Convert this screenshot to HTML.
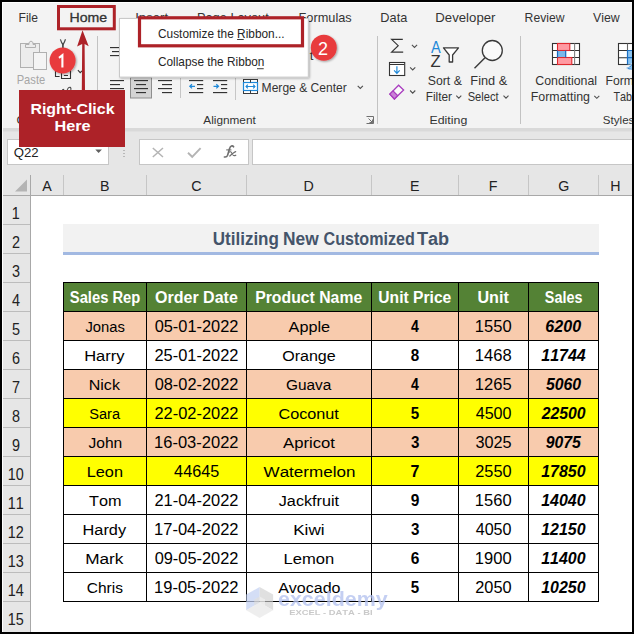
<!DOCTYPE html>
<html><head><meta charset="utf-8"><style>
html,body{margin:0;padding:0;width:634px;height:634px;overflow:hidden;background:#000}
svg{display:block}
text{font-kerning:none}
</style></head><body>
<svg width="634" height="634" viewBox="0 0 634 634">
<rect x="0" y="0" width="634" height="634" fill="#000" />
<rect x="2" y="2" width="630" height="630" fill="#fff" />
<rect x="3" y="3" width="629" height="125" fill="#f3f3f3" />
<rect x="3" y="130" width="629" height="65" fill="#e6e6e6" />
<rect x="3" y="128" width="629" height="3.5" fill="#d9d9d9" />
<rect x="7.5" y="139.5" width="101" height="25" fill="#fff" stroke="#c6c6c6" stroke-width="1"/>
<rect x="139.5" y="139.5" width="109" height="25" fill="#fff" stroke="#c6c6c6" stroke-width="1"/>
<rect x="252.5" y="139.5" width="385" height="25" fill="#fff" stroke="#c6c6c6" stroke-width="1"/>
<rect x="31" y="196" width="601" height="436" fill="#fff" />
<rect x="3" y="196" width="27" height="436" fill="#e6e6e6" />
<text transform="translate(18.51 22.10) scale(0.9621 1)" font-family="Liberation Sans" font-size="12.60" fill="#333333" >File</text>
<text transform="translate(69.54 22.10) scale(1.1213 1)" font-family="Liberation Sans" font-size="12.60" fill="#333333" stroke="#333" stroke-width="0.3">Home</text>
<text transform="translate(135.19 22.10) scale(1.0444 1)" font-family="Liberation Sans" font-size="12.60" fill="#333333" >Insert</text>
<text transform="translate(196.95 22.10) scale(1.0168 1)" font-family="Liberation Sans" font-size="12.60" fill="#333333" >Page Layout</text>
<text transform="translate(298.55 22.10) scale(1.0133 1)" font-family="Liberation Sans" font-size="12.60" fill="#333333" >Formulas</text>
<text transform="translate(380.35 22.10) scale(1.0125 1)" font-family="Liberation Sans" font-size="12.60" fill="#333333" >Data</text>
<text transform="translate(435.32 22.10) scale(1.0482 1)" font-family="Liberation Sans" font-size="12.60" fill="#333333" >Developer</text>
<text transform="translate(524.60 22.10) scale(0.9650 1)" font-family="Liberation Sans" font-size="12.60" fill="#333333" >Review</text>
<text transform="translate(593.05 22.10) scale(0.9785 1)" font-family="Liberation Sans" font-size="12.60" fill="#333333" >View</text>
<rect x="97" y="36" width="1" height="88" fill="#c2c2c2" />
<rect x="377" y="36" width="1" height="88" fill="#c2c2c2" />
<rect x="520" y="36" width="1" height="88" fill="#c2c2c2" />
<rect x="20.5" y="43.5" width="19" height="24" fill="#ececec" stroke="#b0b0b0" stroke-width="1"/>
<path d="M25.5 47.5 V44.5 H29 V42.5 Q31 39.5 33 42.5 V44.5 H35.5 V47.5 Z" fill="#ececec" stroke="#b0b0b0" stroke-width="1"/>
<rect x="33.5" y="52.5" width="13" height="17" fill="#f4f4f4" stroke="#b0b0b0" stroke-width="1"/>
<text transform="translate(16.69 84.40) scale(0.9291 1)" font-family="Liberation Sans" font-size="12.00" fill="#a6a6a6" >Paste</text>
<text transform="translate(16.39 123.80) scale(1.0913 1)" font-family="Liberation Sans" font-size="11.00" fill="#333333" >Clipboard</text>
<path d="M60.4 39.3 Q61.4 42.6 62.9 44.6 Q64.4 42.6 65.5 39.3" fill="none" stroke="#4a4a4a" stroke-width="1.2"/>
<path d="M62.9 44 V48" stroke="#4a4a4a" stroke-width="1.7"/>
<path d="M55.5 70 V76.5 H59.6 M61.5 70 V78.5 H70.5 V70 M63.9 75.5 H68" fill="none" stroke="#333" stroke-width="1.1"/>
<path d="M77.9 70.2 L80.2 72.6 L82.0 70.8" fill="none" stroke="#333" stroke-width="1.1"/>
<path d="M62.2 89.8 L64.2 89.3 M67.2 89.9 Q68.4 86.8 70.2 87.3 Q71.4 87.9 70.8 89.9" fill="none" stroke="#404040" stroke-width="1.1"/>
<rect x="110" y="47" width="14" height="1.15" fill="#333" />
<rect x="112" y="51" width="12" height="1.15" fill="#333" />
<rect x="110" y="55" width="14" height="1.15" fill="#333" />
<text transform="translate(309.80 60.20) scale(1.0567 1)" font-family="Liberation Sans" font-size="12.60" fill="#333333" >t</text>
<rect x="110" y="80" width="14" height="1.15" fill="#333" />
<rect x="110" y="84" width="10" height="1.15" fill="#333" />
<rect x="110" y="88" width="14" height="1.15" fill="#333" />
<rect x="110" y="92" width="10" height="1.15" fill="#333" />
<rect x="130.5" y="77.5" width="21" height="20.5" fill="#d4d4d4" stroke="#8e8e8e" stroke-width="1"/>
<rect x="134" y="80" width="14" height="1.15" fill="#333" />
<rect x="136" y="84" width="10" height="1.15" fill="#333" />
<rect x="134" y="88" width="14" height="1.15" fill="#333" />
<rect x="136" y="92" width="10" height="1.15" fill="#333" />
<rect x="158" y="80" width="14" height="1.15" fill="#333" />
<rect x="162" y="84" width="10" height="1.15" fill="#333" />
<rect x="158" y="88" width="14" height="1.15" fill="#333" />
<rect x="162" y="92" width="10" height="1.15" fill="#333" />
<rect x="180" y="78" width="1" height="20" fill="#c6c6c6" />
<rect x="235" y="78" width="1" height="22" fill="#c6c6c6" />
<rect x="189" y="80" width="14.2" height="1.15" fill="#333" />
<rect x="197" y="84" width="6.2" height="1.15" fill="#333" />
<rect x="197" y="88" width="6.2" height="1.15" fill="#333" />
<rect x="189" y="92" width="14.2" height="1.15" fill="#333" />
<path d="M195 86.3 H189.8 M192 84.2 L189.8 86.3 L192 88.4" fill="none" stroke="#1e88d8" stroke-width="1.2"/>
<rect x="213" y="80" width="14.2" height="1.15" fill="#333" />
<rect x="221" y="84" width="6.2" height="1.15" fill="#333" />
<rect x="221" y="88" width="6.2" height="1.15" fill="#333" />
<rect x="213" y="92" width="14.2" height="1.15" fill="#333" />
<path d="M213.5 86.3 H218.5 M216.3 84.2 L218.5 86.3 L216.3 88.4" fill="none" stroke="#1e88d8" stroke-width="1.2"/>
<rect x="243.5" y="79.5" width="14" height="14" fill="#fff" stroke="#3a3a3a" stroke-width="1"/>
<rect x="243.5" y="82.5" width="14" height="8" fill="#fff" stroke="#1e88d8" stroke-width="1.2"/>
<path d="M250.5 79.5 V82.5 M250.5 90.5 V93.5" stroke="#3a3a3a" stroke-width="1"/>
<path d="M246 86.5 H255 M247.8 84.6 L246 86.5 L247.8 88.4 M253.2 84.6 L255 86.5 L253.2 88.4" fill="none" stroke="#1e88d8" stroke-width="1.1"/>
<text transform="translate(261.61 91.80) scale(0.9590 1)" font-family="Liberation Sans" font-size="12.60" fill="#333333" >Merge &amp; Center</text>
<path d="M357.7 85.8 L360.3 88.4 L362.9 85.8" fill="none" stroke="#505050" stroke-width="1.1"/>
<path d="M366.5 116.5 H373.5 V123.5 H366.5" fill="none" stroke="#606060" stroke-width="0.9"/><path d="M368.5 118.5 L372.5 122.5 M372.5 119.5 V122.5 H369.5" fill="none" stroke="#606060" stroke-width="0.9"/>
<text transform="translate(203.28 123.70) scale(1.0543 1)" font-family="Liberation Sans" font-size="11.20" fill="#333333" >Alignment</text>
<path d="M402.8 39.3 H391.6 L398.2 45.7 L391.6 52.1 H403.2" fill="none" stroke="#333" stroke-width="1.15"/>
<path d="M411.9 44.900000000000006 L414.5 47.5 L417.1 44.900000000000006" fill="none" stroke="#505050" stroke-width="1.1"/>
<path d="M410.09999999999997 67.3 L412.7 69.89999999999999 L415.3 67.3" fill="none" stroke="#505050" stroke-width="1.1"/>
<path d="M410.09999999999997 90.5 L412.7 93.1 L415.3 90.5" fill="none" stroke="#505050" stroke-width="1.1"/>
<rect x="389.5" y="62.5" width="15.2" height="13" fill="#fff" stroke="#333" stroke-width="1.1"/>
<rect x="390" y="64" width="14.2" height="1.0" fill="#333" />
<path d="M396.9 66.2 V73.2 M394.1 70.4 L396.9 73.3 L399.7 70.4" fill="none" stroke="#1e88d8" stroke-width="1.2"/>
<path d="M389.8 94.1 L398.6 85.2 L403.6 90.0 L394.4 99.0 Z" fill="#fafafa" stroke="#a83bbf" stroke-width="1.3" stroke-linejoin="miter"/>
<path d="M389.8 94.1 L393.0 90.9 L397.6 95.6 L394.4 99.0 Z" fill="#c982d6" stroke="#a83bbf" stroke-width="1.2"/>
<text transform="translate(430.97 52.60) scale(0.8605 1)" font-family="Liberation Sans" font-size="17.00" fill="#1e88d8" >A</text>
<text transform="translate(430.47 66.50) scale(1.0006 1)" font-family="Liberation Sans" font-size="16.60" fill="#333" >Z</text>
<path d="M443.5 47.8 H458.5 L452.6 55 V62 H449.2 V55 Z" fill="#fff" stroke="#3a3a3a" stroke-width="1.3" stroke-linejoin="round"/>
<text transform="translate(427.74 84.90) scale(0.9754 1)" font-family="Liberation Sans" font-size="12.60" fill="#333333" >Sort &amp;</text>
<text transform="translate(425.73 100.70) scale(0.9381 1)" font-family="Liberation Sans" font-size="12.60" fill="#333333" >Filter</text>
<path d="M456.3 95.6 L458.8 98.1 L461.3 95.6" fill="none" stroke="#505050" stroke-width="1.1"/>
<text transform="translate(429.49 123.80) scale(1.1041 1)" font-family="Liberation Sans" font-size="11.20" fill="#333333" >Editing</text>
<circle cx="492.3" cy="50.5" r="10" fill="#fafafa" stroke="#3a3a3a" stroke-width="1.3"/>
<path d="M485 57.8 L474.5 68.3" stroke="#3a3a3a" stroke-width="1.4"/>
<text transform="translate(470.35 85.00) scale(1.0118 1)" font-family="Liberation Sans" font-size="12.60" fill="#333333" >Find &amp;</text>
<text transform="translate(467.69 100.70) scale(0.8849 1)" font-family="Liberation Sans" font-size="12.60" fill="#333333" >Select</text>
<path d="M503.5 95.6 L506 98.1 L508.5 95.6" fill="none" stroke="#505050" stroke-width="1.1"/>
<rect x="552.5" y="43.5" width="27" height="21" fill="#fff" stroke="#333" stroke-width="1.1"/>
<path d="M552.5 50.5 H579.5 M552.5 57.5 H579.5" stroke="#333" stroke-width="1.1"/>
<path d="M574.6 43.5 V64.5" stroke="#808080" stroke-width="1.1"/>
<rect x="557.5" y="43.5" width="12.3" height="7" fill="#ff9aa2" stroke="#e0282e" stroke-width="1.1"/>
<rect x="557.5" y="57.5" width="14.3" height="7" fill="#ff9aa2" stroke="#e0282e" stroke-width="1.1"/>
<rect x="557.5" y="51" width="8.2" height="6" fill="#7ab8ea"/>
<path d="M557.5 50.5 V57.5 M565.7 50.5 V57.5" stroke="#1565c0" stroke-width="1.2"/>
<text transform="translate(535.27 85.00) scale(0.9812 1)" font-family="Liberation Sans" font-size="12.60" fill="#333333" >Conditional</text>
<text transform="translate(530.78 100.70) scale(0.9833 1)" font-family="Liberation Sans" font-size="12.60" fill="#333333" >Formatting</text>
<path d="M594.3 95.8 L596.8 98.3 L599.3 95.8" fill="none" stroke="#505050" stroke-width="1.1"/>
<rect x="618.5" y="43.5" width="20" height="21" fill="#fff" stroke="#333" stroke-width="1.1"/>
<path d="M618.5 50.5 H640 M618.5 57.7 H627.5" stroke="#333" stroke-width="1.1"/>
<path d="M627.5 43.5 V50.5" stroke="#666" stroke-width="1.1"/>
<rect x="628" y="51" width="12" height="13.5" fill="#8cc4f0" />
<path d="M627.5 64.5 V50.5 H640 M627.5 57.7 H640" fill="none" stroke="#1a6fc4" stroke-width="1.2"/>
<path d="M624.8 67.4 Q628.6 68.2 631.2 64.6 Q632.4 62.4 634 61 V70 Q629 70.6 624.8 67.4 Z" fill="#1a6fc4" stroke="#fff" stroke-width="0.8"/>
<path d="M627.4 67.6 Q630.6 67.4 632.2 64.2 L634 62.6 V68.6 Q630 69.6 627.4 67.6 Z" fill="#8cc4f0"/>
<text transform="translate(605.60 85.00) scale(0.9670 1)" font-family="Liberation Sans" font-size="12.60" fill="#333333" >Format as</text>
<text transform="translate(613.46 100.70) scale(0.8574 1)" font-family="Liberation Sans" font-size="12.60" fill="#333333" >Table</text>
<text transform="translate(602.87 124.00) scale(1.0343 1)" font-family="Liberation Sans" font-size="11.20" fill="#333333" >Styles</text>
<text transform="translate(13.78 157.20) scale(1.0618 1)" font-family="Liberation Sans" font-size="12.40" fill="#222" >Q22</text>
<polygon points="95.3,149.6 101.9,149.6 98.6,152.9" fill="#606060"/>
<rect x="123.5" y="150.0" width="1" height="1" fill="#8a8a8a" />
<rect x="123.5" y="153.0" width="1" height="1" fill="#8a8a8a" />
<rect x="123.5" y="156.0" width="1" height="1" fill="#8a8a8a" />
<path d="M152.8 148 L163 157 M163 148 L152.8 157" stroke="#b4b4b4" stroke-width="1.5"/>
<path d="M188 152.8 L192.2 156.8 L200.6 148.2" fill="none" stroke="#b4b4b4" stroke-width="1.9"/>
<path d="M233.6 146.8 Q232.8 145.6 231.4 146.0 Q230.0 146.5 229.5 148.8 L227.6 155.2 Q226.8 157.4 224.4 157.0" fill="none" stroke="#6e6e6e" stroke-width="1.6" stroke-linecap="round"/>
<path d="M226.2 149.9 H231.4" stroke="#6e6e6e" stroke-width="1.1"/>
<path d="M229.4 152.0 Q230.8 151.2 231.6 152.8 L233.0 155.0 Q233.9 156.2 235.8 155.2 M235.7 151.6 Q234.0 152.2 229.8 156.0" fill="none" stroke="#6e6e6e" stroke-width="1.2" stroke-linecap="round"/>
<rect x="3" y="195" width="629" height="1" fill="#a8a8a8" />
<rect x="30" y="175" width="1" height="457" fill="#a8a8a8" />
<rect x="63" y="175" width="1" height="20" fill="#c6c6c6" />
<rect x="146" y="175" width="1" height="20" fill="#c6c6c6" />
<rect x="246" y="175" width="1" height="20" fill="#c6c6c6" />
<rect x="371" y="175" width="1" height="20" fill="#c6c6c6" />
<rect x="458" y="175" width="1" height="20" fill="#c6c6c6" />
<rect x="528" y="175" width="1" height="20" fill="#c6c6c6" />
<rect x="598" y="175" width="1" height="20" fill="#c6c6c6" />
<polygon points="27,179.5 27,191.5 15,191.5" fill="#b4b4b4"/>
<text transform="translate(42.25 190.80) scale(0.9500 1)" font-family="Liberation Sans" font-size="15.00" fill="#222" >A</text>
<text transform="translate(100.04 190.80) scale(0.9500 1)" font-family="Liberation Sans" font-size="15.00" fill="#222" >B</text>
<text transform="translate(191.26 190.80) scale(0.9500 1)" font-family="Liberation Sans" font-size="15.00" fill="#222" >C</text>
<text transform="translate(303.61 190.80) scale(0.9500 1)" font-family="Liberation Sans" font-size="15.00" fill="#222" >D</text>
<text transform="translate(409.97 190.80) scale(0.9500 1)" font-family="Liberation Sans" font-size="15.00" fill="#222" >E</text>
<text transform="translate(488.85 190.80) scale(0.9500 1)" font-family="Liberation Sans" font-size="15.00" fill="#222" >F</text>
<text transform="translate(558.13 190.80) scale(0.9500 1)" font-family="Liberation Sans" font-size="15.00" fill="#222" >G</text>
<text transform="translate(610.35 190.80) scale(0.9500 1)" font-family="Liberation Sans" font-size="15.00" fill="#222" >H</text>
<text transform="translate(11.80 218.80) scale(0.9000 1)" font-family="Liberation Sans" font-size="16.00" fill="#222" >1</text>
<rect x="3" y="224" width="27" height="1" fill="#bcbcbc" />
<text transform="translate(12.00 247.80) scale(0.9000 1)" font-family="Liberation Sans" font-size="16.00" fill="#222" >2</text>
<rect x="3" y="253" width="27" height="1" fill="#bcbcbc" />
<text transform="translate(12.04 276.80) scale(0.9000 1)" font-family="Liberation Sans" font-size="16.00" fill="#222" >3</text>
<rect x="3" y="282" width="27" height="1" fill="#bcbcbc" />
<text transform="translate(12.04 305.80) scale(0.9000 1)" font-family="Liberation Sans" font-size="16.00" fill="#222" >4</text>
<rect x="3" y="311" width="27" height="1" fill="#bcbcbc" />
<text transform="translate(12.01 334.80) scale(0.9000 1)" font-family="Liberation Sans" font-size="16.00" fill="#222" >5</text>
<rect x="3" y="340" width="27" height="1" fill="#bcbcbc" />
<text transform="translate(11.95 363.80) scale(0.9000 1)" font-family="Liberation Sans" font-size="16.00" fill="#222" >6</text>
<rect x="3" y="369" width="27" height="1" fill="#bcbcbc" />
<text transform="translate(11.99 392.80) scale(0.9000 1)" font-family="Liberation Sans" font-size="16.00" fill="#222" >7</text>
<rect x="3" y="398" width="27" height="1" fill="#bcbcbc" />
<text transform="translate(12.00 421.80) scale(0.9000 1)" font-family="Liberation Sans" font-size="16.00" fill="#222" >8</text>
<rect x="3" y="427" width="27" height="1" fill="#bcbcbc" />
<text transform="translate(12.00 450.80) scale(0.9000 1)" font-family="Liberation Sans" font-size="16.00" fill="#222" >9</text>
<rect x="3" y="456" width="27" height="1" fill="#bcbcbc" />
<text transform="translate(7.72 479.80) scale(0.9000 1)" font-family="Liberation Sans" font-size="16.00" fill="#222" >10</text>
<rect x="3" y="485" width="27" height="1" fill="#bcbcbc" />
<text transform="translate(7.79 508.80) scale(0.9000 1)" font-family="Liberation Sans" font-size="16.00" fill="#222" >11</text>
<rect x="3" y="514" width="27" height="1" fill="#bcbcbc" />
<text transform="translate(7.81 537.80) scale(0.9000 1)" font-family="Liberation Sans" font-size="16.00" fill="#222" >12</text>
<rect x="3" y="543" width="27" height="1" fill="#bcbcbc" />
<text transform="translate(7.76 566.80) scale(0.9000 1)" font-family="Liberation Sans" font-size="16.00" fill="#222" >13</text>
<rect x="3" y="572" width="27" height="1" fill="#bcbcbc" />
<text transform="translate(7.65 595.80) scale(0.9000 1)" font-family="Liberation Sans" font-size="16.00" fill="#222" >14</text>
<rect x="3" y="601" width="27" height="1" fill="#bcbcbc" />
<text transform="translate(7.75 624.80) scale(0.9000 1)" font-family="Liberation Sans" font-size="16.00" fill="#222" >15</text>
<rect x="63" y="224" width="536" height="28" fill="#f2f2f2" />
<rect x="63" y="252" width="536" height="3" fill="#a2b9e2" />
<text transform="translate(212.78 244.70) scale(0.9668 1)" font-family="Liberation Sans" font-size="17.60" font-weight="bold" fill="#44546a" >Utilizing</text>
<text transform="translate(283.04 244.70) scale(0.9873 1)" font-family="Liberation Sans" font-size="17.60" font-weight="bold" fill="#44546a" >New</text>
<text transform="translate(323.54 244.70) scale(0.9156 1)" font-family="Liberation Sans" font-size="17.60" font-weight="bold" fill="#44546a" >Customized</text>
<text transform="translate(417.00 244.70) scale(1.0273 1)" font-family="Liberation Sans" font-size="17.60" font-weight="bold" fill="#44546a" >Tab</text>
<rect x="63" y="282" width="535" height="29" fill="#548235" />
<rect x="63" y="311" width="535" height="29" fill="#f8cbad" />
<rect x="63" y="340" width="535" height="29" fill="#ffffff" />
<rect x="63" y="369" width="535" height="29" fill="#f8cbad" />
<rect x="63" y="398" width="535" height="29" fill="#ffff00" />
<rect x="63" y="427" width="535" height="29" fill="#f8cbad" />
<rect x="63" y="456" width="535" height="29" fill="#ffff00" />
<rect x="63" y="485" width="535" height="29" fill="#ffffff" />
<rect x="63" y="514" width="535" height="29" fill="#ffffff" />
<rect x="63" y="543" width="535" height="29" fill="#ffffff" />
<rect x="63" y="572" width="535" height="29" fill="#ffffff" />
<text transform="translate(69.80 302.80) scale(0.9464 1)" font-family="Liberation Sans" font-size="15.60" font-weight="bold" fill="#fff" >Sales Rep</text>
<text transform="translate(155.00 302.80) scale(1.0281 1)" font-family="Liberation Sans" font-size="15.60" font-weight="bold" fill="#fff" >Order Date</text>
<text transform="translate(255.20 302.80) scale(1.0125 1)" font-family="Liberation Sans" font-size="15.60" font-weight="bold" fill="#fff" >Product Name</text>
<text transform="translate(378.34 302.80) scale(1.0013 1)" font-family="Liberation Sans" font-size="15.60" font-weight="bold" fill="#fff" >Unit Price</text>
<text transform="translate(477.40 302.80) scale(1.0361 1)" font-family="Liberation Sans" font-size="15.60" font-weight="bold" fill="#fff" >Unit</text>
<text transform="translate(544.80 302.80) scale(0.9217 1)" font-family="Liberation Sans" font-size="15.60" font-weight="bold" fill="#fff" >Sales</text>
<text transform="translate(85.39 331.90) scale(0.9554 1)" font-family="Liberation Sans" font-size="15.50" fill="#000" >Jonas</text>
<text transform="translate(154.66 331.90) scale(1.0312 1)" font-family="Liberation Sans" font-size="15.90" fill="#000" >05-01-2022</text>
<text transform="translate(288.56 331.90) scale(1.0486 1)" font-family="Liberation Sans" font-size="15.50" fill="#000" >Apple</text>
<text transform="translate(411.03 331.90) scale(0.8833 1)" font-family="Liberation Sans" font-size="15.90" font-weight="bold" fill="#000" >4</text>
<text transform="translate(474.79 331.90) scale(1.0403 1)" font-family="Liberation Sans" font-size="15.90" fill="#000" >1550</text>
<text transform="translate(545.31 331.90) scale(1.0120 1)" font-family="Liberation Sans" font-size="15.90" font-weight="bold" font-style="italic" fill="#000" >6200</text>
<text transform="translate(84.18 360.90) scale(1.0642 1)" font-family="Liberation Sans" font-size="15.50" fill="#000" >Harry</text>
<text transform="translate(154.47 360.90) scale(1.0335 1)" font-family="Liberation Sans" font-size="15.90" fill="#000" >25-01-2022</text>
<text transform="translate(282.19 360.90) scale(1.0363 1)" font-family="Liberation Sans" font-size="15.50" fill="#000" >Orange</text>
<text transform="translate(410.75 360.90) scale(0.9585 1)" font-family="Liberation Sans" font-size="15.90" font-weight="bold" fill="#000" >8</text>
<text transform="translate(474.79 360.90) scale(1.0425 1)" font-family="Liberation Sans" font-size="15.90" fill="#000" >1468</text>
<text transform="translate(541.23 360.90) scale(1.0075 1)" font-family="Liberation Sans" font-size="15.90" font-weight="bold" font-style="italic" fill="#000" >11744</text>
<text transform="translate(88.71 389.90) scale(1.0365 1)" font-family="Liberation Sans" font-size="15.50" fill="#000" >Nick</text>
<text transform="translate(154.66 389.90) scale(1.0312 1)" font-family="Liberation Sans" font-size="15.90" fill="#000" >08-02-2022</text>
<text transform="translate(285.93 389.90) scale(0.9933 1)" font-family="Liberation Sans" font-size="15.50" fill="#000" >Guava</text>
<text transform="translate(411.03 389.90) scale(0.8833 1)" font-family="Liberation Sans" font-size="15.90" font-weight="bold" fill="#000" >4</text>
<text transform="translate(474.79 389.90) scale(1.0418 1)" font-family="Liberation Sans" font-size="15.90" fill="#000" >1265</text>
<text transform="translate(545.90 389.90) scale(0.9952 1)" font-family="Liberation Sans" font-size="15.90" font-weight="bold" font-style="italic" fill="#000" >5060</text>
<text transform="translate(89.24 418.90) scale(0.9424 1)" font-family="Liberation Sans" font-size="15.50" fill="#000" >Sara</text>
<text transform="translate(154.47 418.90) scale(1.0335 1)" font-family="Liberation Sans" font-size="15.90" fill="#000" >22-02-2022</text>
<text transform="translate(278.41 418.90) scale(1.0476 1)" font-family="Liberation Sans" font-size="15.50" fill="#000" >Coconut</text>
<text transform="translate(410.77 418.90) scale(0.9509 1)" font-family="Liberation Sans" font-size="15.90" font-weight="bold" fill="#000" >5</text>
<text transform="translate(475.68 418.90) scale(1.0147 1)" font-family="Liberation Sans" font-size="15.90" fill="#000" >4500</text>
<text transform="translate(541.74 418.90) scale(0.9934 1)" font-family="Liberation Sans" font-size="15.90" font-weight="bold" font-style="italic" fill="#000" >22500</text>
<text transform="translate(88.48 447.90) scale(1.0057 1)" font-family="Liberation Sans" font-size="15.50" fill="#000" >John</text>
<text transform="translate(154.04 447.90) scale(1.0389 1)" font-family="Liberation Sans" font-size="15.90" fill="#000" >16-03-2022</text>
<text transform="translate(283.06 447.90) scale(1.0772 1)" font-family="Liberation Sans" font-size="15.50" fill="#000" >Apricot</text>
<text transform="translate(410.89 447.90) scale(0.9519 1)" font-family="Liberation Sans" font-size="15.90" font-weight="bold" fill="#000" >3</text>
<text transform="translate(475.43 447.90) scale(1.0233 1)" font-family="Liberation Sans" font-size="15.90" fill="#000" >3025</text>
<text transform="translate(545.68 447.90) scale(0.9917 1)" font-family="Liberation Sans" font-size="15.90" font-weight="bold" font-style="italic" fill="#000" >9075</text>
<text transform="translate(86.73 476.90) scale(1.0518 1)" font-family="Liberation Sans" font-size="15.50" fill="#000" >Leon</text>
<text transform="translate(174.12 476.90) scale(1.0193 1)" font-family="Liberation Sans" font-size="15.90" fill="#000" >44645</text>
<text transform="translate(263.57 476.90) scale(1.0998 1)" font-family="Liberation Sans" font-size="15.50" fill="#000" >Watermelon</text>
<text transform="translate(410.55 476.90) scale(1.0083 1)" font-family="Liberation Sans" font-size="15.90" font-weight="bold" fill="#000" >7</text>
<text transform="translate(475.23 476.90) scale(1.0277 1)" font-family="Liberation Sans" font-size="15.90" fill="#000" >2550</text>
<text transform="translate(541.23 476.90) scale(1.0049 1)" font-family="Liberation Sans" font-size="15.90" font-weight="bold" font-style="italic" fill="#000" >17850</text>
<text transform="translate(89.11 505.90) scale(1.0477 1)" font-family="Liberation Sans" font-size="15.50" fill="#000" >Tom</text>
<text transform="translate(154.47 505.90) scale(1.0335 1)" font-family="Liberation Sans" font-size="15.90" fill="#000" >21-04-2022</text>
<text transform="translate(278.78 505.90) scale(1.0451 1)" font-family="Liberation Sans" font-size="15.50" fill="#000" >Jackfruit</text>
<text transform="translate(410.70 505.90) scale(0.9768 1)" font-family="Liberation Sans" font-size="15.90" font-weight="bold" fill="#000" >9</text>
<text transform="translate(474.79 505.90) scale(1.0403 1)" font-family="Liberation Sans" font-size="15.90" fill="#000" >1560</text>
<text transform="translate(541.23 505.90) scale(1.0049 1)" font-family="Liberation Sans" font-size="15.90" font-weight="bold" font-style="italic" fill="#000" >14040</text>
<text transform="translate(82.60 534.90) scale(1.0518 1)" font-family="Liberation Sans" font-size="15.50" fill="#000" >Hardy</text>
<text transform="translate(154.04 534.90) scale(1.0389 1)" font-family="Liberation Sans" font-size="15.90" fill="#000" >17-04-2022</text>
<text transform="translate(293.15 534.90) scale(1.1064 1)" font-family="Liberation Sans" font-size="15.50" fill="#000" >Kiwi</text>
<text transform="translate(410.89 534.90) scale(0.9519 1)" font-family="Liberation Sans" font-size="15.90" font-weight="bold" fill="#000" >3</text>
<text transform="translate(475.68 534.90) scale(1.0147 1)" font-family="Liberation Sans" font-size="15.90" fill="#000" >4050</text>
<text transform="translate(541.23 534.90) scale(1.0049 1)" font-family="Liberation Sans" font-size="15.90" font-weight="bold" font-style="italic" fill="#000" >12150</text>
<text transform="translate(85.15 563.90) scale(1.1107 1)" font-family="Liberation Sans" font-size="15.50" fill="#000" >Mark</text>
<text transform="translate(154.66 563.90) scale(1.0312 1)" font-family="Liberation Sans" font-size="15.90" fill="#000" >09-05-2022</text>
<text transform="translate(283.51 563.90) scale(1.0695 1)" font-family="Liberation Sans" font-size="15.50" fill="#000" >Lemon</text>
<text transform="translate(410.67 563.90) scale(0.9788 1)" font-family="Liberation Sans" font-size="15.90" font-weight="bold" fill="#000" >6</text>
<text transform="translate(474.79 563.90) scale(1.0403 1)" font-family="Liberation Sans" font-size="15.90" fill="#000" >1900</text>
<text transform="translate(541.23 563.90) scale(1.0049 1)" font-family="Liberation Sans" font-size="15.90" font-weight="bold" font-style="italic" fill="#000" >11400</text>
<text transform="translate(86.76 592.90) scale(1.0023 1)" font-family="Liberation Sans" font-size="15.50" fill="#000" >Chris</text>
<text transform="translate(154.04 592.90) scale(1.0389 1)" font-family="Liberation Sans" font-size="15.90" fill="#000" >19-05-2022</text>
<text transform="translate(278.16 592.90) scale(1.0332 1)" font-family="Liberation Sans" font-size="15.50" fill="#000" >Avocado</text>
<text transform="translate(410.77 592.90) scale(0.9509 1)" font-family="Liberation Sans" font-size="15.90" font-weight="bold" fill="#000" >5</text>
<text transform="translate(475.23 592.90) scale(1.0277 1)" font-family="Liberation Sans" font-size="15.90" fill="#000" >2050</text>
<text transform="translate(541.23 592.90) scale(1.0049 1)" font-family="Liberation Sans" font-size="15.90" font-weight="bold" font-style="italic" fill="#000" >10250</text>
<rect x="63" y="282" width="536" height="1" fill="#000" />
<rect x="63" y="311" width="536" height="1" fill="#000" />
<rect x="63" y="340" width="536" height="1" fill="#000" />
<rect x="63" y="369" width="536" height="1" fill="#000" />
<rect x="63" y="398" width="536" height="1" fill="#000" />
<rect x="63" y="427" width="536" height="1" fill="#000" />
<rect x="63" y="456" width="536" height="1" fill="#000" />
<rect x="63" y="485" width="536" height="1" fill="#000" />
<rect x="63" y="514" width="536" height="1" fill="#000" />
<rect x="63" y="543" width="536" height="1" fill="#000" />
<rect x="63" y="572" width="536" height="1" fill="#000" />
<rect x="63" y="601" width="536" height="1" fill="#000" />
<rect x="63" y="282" width="1" height="320" fill="#000" />
<rect x="146" y="282" width="1" height="320" fill="#000" />
<rect x="246" y="282" width="1" height="320" fill="#000" />
<rect x="371" y="282" width="1" height="320" fill="#000" />
<rect x="458" y="282" width="1" height="320" fill="#000" />
<rect x="528" y="282" width="1" height="320" fill="#000" />
<rect x="598" y="282" width="1" height="320" fill="#000" />
<g opacity="0.9">
<polygon points="259.6,587.0 246.2,594.6 246.2,610.3 259.6,602.5" fill="#c3d1f3" opacity="0.80"/>
<polygon points="259.6,587.0 273.1,594.6 273.1,610.3 259.6,602.5" fill="#cfcfcf" opacity="0.70"/>
<polygon points="246.2,610.3 259.6,618.0 273.1,610.3 259.6,602.5" fill="#e6e6e6" opacity="0.70"/>
<polygon points="259.6,596.5 254.2,599.6 254.2,605.6 259.6,602.5" fill="#dcdcdc" opacity="0.80"/>
<polygon points="259.6,596.5 265.0,599.6 265.0,605.6 259.6,602.5" fill="#eeeeee" opacity="0.80"/>
<text transform="translate(277.96 605.70) scale(1.0948 1)" font-family="Liberation Sans" font-size="19.60" font-weight="bold" fill="#b3c1ef" opacity="0.85">exceldemy</text>
<text transform="translate(289.17 614.80) scale(1.2179 1)" font-family="Liberation Sans" font-size="7.70" font-weight="bold" fill="#c4c4c4" >EXCEL - DATA - BI</text>
</g>
<defs><filter id="msh" x="-20%" y="-40%" width="140%" height="180%"><feGaussianBlur in="SourceAlpha" stdDeviation="1.3"/><feOffset dx="0.8" dy="1"/><feComponentTransfer><feFuncA type="linear" slope="0.28"/></feComponentTransfer><feMerge><feMergeNode/><feMergeNode in="SourceGraphic"/></feMerge></filter>
<filter id="csh" x="-30%" y="-30%" width="160%" height="160%"><feGaussianBlur in="SourceAlpha" stdDeviation="0.8"/><feOffset dx="0.5" dy="1"/><feComponentTransfer><feFuncA type="linear" slope="0.35"/></feComponentTransfer><feMerge><feMergeNode/><feMergeNode in="SourceGraphic"/></feMerge></filter></defs>
<rect x="119.5" y="18.5" width="188.8" height="58.6" fill="#fff" stroke="#c9c9c9" stroke-width="1" filter="url(#msh)"/>
<text transform="translate(158.00 37.80) scale(0.9573 1)" font-family="Liberation Sans" font-size="12.40" fill="#262626" >Customize the Ribbon...</text>
<text transform="translate(158.00 65.90) scale(0.9534 1)" font-family="Liberation Sans" font-size="12.40" fill="#262626" >Collapse the Ribbon</text>
<rect x="237.1" y="39.1" width="6.6" height="0.9" fill="#262626" />
<rect x="257.0" y="68.3" width="6.7" height="0.9" fill="#262626" />
<rect x="139.5" y="17.8" width="163" height="28" fill="none" stroke="#ad2228" stroke-width="3.2"/>
<rect x="58.5" y="6.5" width="55.8" height="22.3" fill="none" stroke="#ad2228" stroke-width="3"/>
<path d="M81.8 90 L82.2 44 L77.1 46.5 L82.5 30.2 L88.7 46.3 L84.6 44 L85 90 Z" fill="#ad2228"/>
<rect x="19" y="90" width="106" height="57" fill="#ad2228"/>
<text transform="translate(30.43 113.80) scale(1.0629 1)" font-family="Liberation Sans" font-size="15.00" font-weight="bold" fill="#fff" >Right-Click</text>
<text transform="translate(54.41 131.30) scale(1.0836 1)" font-family="Liberation Sans" font-size="15.00" font-weight="bold" fill="#fff" >Here</text>
<circle cx="62.6" cy="60.5" r="13" fill="#e83a3c" filter="url(#csh)"/>
<circle cx="323.8" cy="47.8" r="13" fill="#e83a3c" filter="url(#csh)"/>
<path d="M62.4 67.4 V55.2 L59.0 57.8" fill="none" stroke="#fff" stroke-width="2.1" stroke-linejoin="miter"/>
<text transform="translate(317.99 54.50) scale(1.0285 1)" font-family="Liberation Sans" font-size="17.50" fill="#fff" >2</text>
<rect x="0" y="0" width="634" height="2" fill="#000" />
<rect x="0" y="632" width="634" height="2" fill="#000" />
<rect x="0" y="0" width="2" height="634" fill="#000" />
<rect x="632" y="0" width="2" height="634" fill="#000" />
</svg>
</body></html>
